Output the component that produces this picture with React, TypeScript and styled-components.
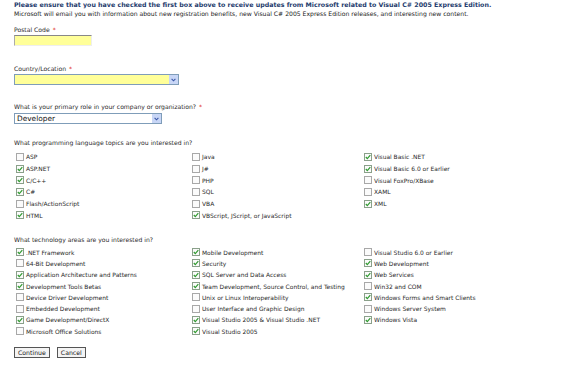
import React from "react";
import styled, { createGlobalStyle } from "styled-components";

const GlobalStyle = createGlobalStyle`
  body {
    margin: 0;
    background: #ffffff;
    font-family: "DejaVu Sans", Verdana, sans-serif;
  }
`;

const Page = styled.div`
  width: 575px;
  height: 372px;
  padding: 0 0 0 14px;
  box-sizing: border-box;
  overflow: hidden;
  color: #2a2a2a;
  font-size: 6px;
`;

const Title = styled.div`
  font-weight: bold;
  font-size: 6.3px;
  line-height: 10px;
  color: #1e3b6d;
  white-space: nowrap;
`;

const Note = styled.div`
  font-size: 6.1px;
  line-height: 8px;
  color: #1a1a1a;
  white-space: nowrap;
`;

const Label = styled.div<{ $top: number }>`
  margin-top: ${(p) => p.$top}px;
  line-height: 8px;
  font-size: 6.1px;
  white-space: nowrap;
`;

const Req = styled.span`
  color: #e0301e;
  margin-left: 3px;
`;

const TextInput = styled.div`
  margin-top: 1px;
  width: 78px;
  height: 11px;
  box-sizing: border-box;
  background: #ffff99;
  border-top: 1px solid #888;
  border-left: 1px solid #aaa;
  border-right: 1px solid #eee;
  border-bottom: 1px solid #eee;
`;

const Select = styled.div<{ $w: number; $fill: string; $mt: number }>`
  margin-top: ${(p) => p.$mt}px;
  width: ${(p) => p.$w}px;
  height: 11px;
  box-sizing: border-box;
  border: 1px solid #7f9db9;
  background: ${(p) => p.$fill};
  display: flex;
  align-items: center;
  justify-content: space-between;
  font-size: 7.4px;
  color: #111;
`;

const SelectText = styled.span`
  padding-left: 2px;
  line-height: 9px;
`;

const Arrow = styled.span`
  width: 9px;
  height: 9px;
  background: #c8d6f6;
  display: flex;
  align-items: center;
  justify-content: center;
`;

const Grid = styled.div<{ $mt: number; $row: number }>`
  margin-top: ${(p) => p.$mt}px;
  display: grid;
  grid-template-columns: 176px 172px 1fr;
  grid-auto-rows: ${(p) => p.$row}px;
`;

const Item = styled.div`
  display: flex;
  align-items: center;
  gap: 2px;
  padding-left: 2px;
  font-size: 5.95px;
  white-space: nowrap;
  color: #2a2a2a;
`;

const Box = styled.span<{ $on: boolean }>`
  width: 8px;
  height: 8px;
  box-sizing: border-box;
  border: 1px solid ${(p) => (p.$on ? "#8aa08a" : "#a8a8a8")};
  background: #fbfbfb;
  display: flex;
  align-items: center;
  justify-content: center;
  flex: none;
`;

const Buttons = styled.div`
  margin-top: 10px;
  display: flex;
  gap: 7px;
`;

const Button = styled.div`
  height: 11px;
  padding: 0 3px;
  box-sizing: border-box;
  border: 1px solid #555;
  background: #f4f4f4;
  font-size: 6.2px;
  line-height: 9px;
  color: #222;
`;

type Opt = [string, boolean];

const languages: Opt[] = [
  ["ASP", false], ["Java", false], ["Visual Basic .NET", true],
  ["ASP.NET", true], ["J#", false], ["Visual Basic 6.0 or Earlier", true],
  ["C/C++", true], ["PHP", false], ["Visual FoxPro/XBase", false],
  ["C#", true], ["SQL", false], ["XAML", false],
  ["Flash/ActionScript", false], ["VBA", false], ["XML", true],
  ["HTML", true], ["VBScript, JScript, or JavaScript", true], ["", false],
];

const tech: Opt[] = [
  [".NET Framework", true], ["Mobile Development", true], ["Visual Studio 6.0 or Earlier", false],
  ["64-Bit Development", false], ["Security", true], ["Web Development", true],
  ["Application Architecture and Patterns", true], ["SQL Server and Data Access", true], ["Web Services", true],
  ["Development Tools Betas", true], ["Team Development, Source Control, and Testing", true], ["Win32 and COM", false],
  ["Device Driver Development", false], ["Unix or Linux Interoperability", false], ["Windows Forms and Smart Clients", true],
  ["Embedded Development", false], ["User Interface and Graphic Design", false], ["Windows Server System", false],
  ["Game Development/DirectX", true], ["Visual Studio 2005 & Visual Studio .NET", true], ["Windows Vista", true],
  ["Microsoft Office Solutions", false], ["Visual Studio 2005", true], ["", false],
];

const Check = () => (
  <svg width="6" height="6" viewBox="0 0 6 6">
    <path d="M0.8 3 L2.3 4.6 L5.3 1.2" fill="none" stroke="#2f9a2f" strokeWidth="1.2" />
  </svg>
);

const Chevron = () => (
  <svg width="5" height="4" viewBox="0 0 5 4">
    <path d="M0.6 0.8 L2.5 2.8 L4.4 0.8" fill="none" stroke="#3a58a8" strokeWidth="1.1" />
  </svg>
);

const Options: React.FC<{ items: Opt[] }> = ({ items }) => (
  <>
    {items.map(([text, on], i) =>
      text ? (
        <Item key={i}>
          <Box $on={on}>{on && <Check />}</Box>
          {text}
        </Item>
      ) : (
        <span key={i} />
      )
    )}
  </>
);

const App: React.FC = () => (
  <Page>
    <GlobalStyle />
    <Title>
      Please ensure that you have checked the first box above to receive updates from Microsoft related to Visual C# 2005 Express Edition.
    </Title>
    <Note>
      Microsoft will email you with information about new registration benefits, new Visual C# 2005 Express Edition releases, and interesting new content.
    </Note>

    <Label $top={8}>
      Postal Code<Req>*</Req>
    </Label>
    <TextInput />

    <Label $top={19}>
      Country/Location<Req>*</Req>
    </Label>
    <Select $w={165} $fill="#ffff99" $mt={1}>
      <SelectText />
      <Arrow>
        <Chevron />
      </Arrow>
    </Select>

    <Label $top={18}>
      What is your primary role in your company or organization?<Req>*</Req>
    </Label>
    <Select $w={148} $fill="#ffffff" $mt={2}>
      <SelectText>Developer</SelectText>
      <Arrow>
        <Chevron />
      </Arrow>
    </Select>

    <Label $top={15}>What programming language topics are you interested in?</Label>
    <Grid $mt={4} $row={11.7}>
      <Options items={languages} />
    </Grid>

    <Label $top={15}>What technology areas are you interested in?</Label>
    <Grid $mt={2.4} $row={11.3}>
      <Options items={tech} />
    </Grid>

    <Buttons>
      <Button>Continue</Button>
      <Button>Cancel</Button>
    </Buttons>
  </Page>
);

export default App;
